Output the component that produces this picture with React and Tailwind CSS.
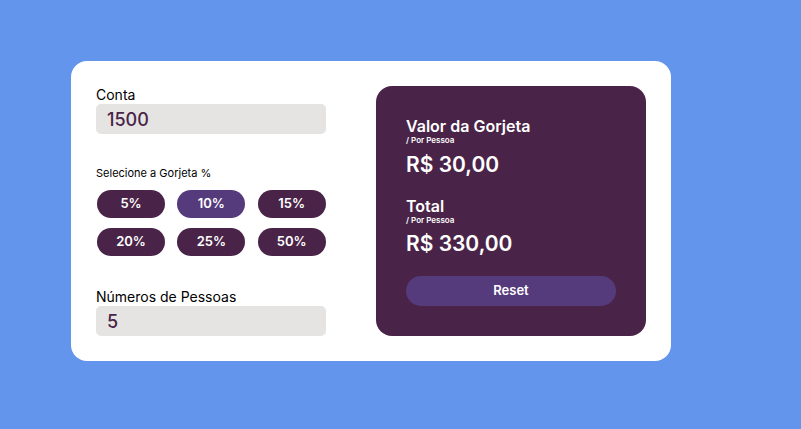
import React, { useState } from 'react';

const tips = [5, 10, 15, 20, 25, 50];

const App = () => {
    const [bill, setBill] = useState('1500');
    const [people, setPeople] = useState('5');
    const [tip, setTip] = useState(10);

    const b = parseFloat(bill) || 0;
    const p = parseInt(people) || 1;
    const tipValue = (b * tip) / 100 / p;
    const total = (b + (b * tip) / 100) / p;
    const fmt = (n) => 'R$ ' + n.toFixed(2).replace('.', ',');

    return (
        <div
            className="min-h-screen w-full bg-[#6495ed] pt-[61px] pl-[71px]"
            style={{ fontFamily: 'Inter, "Noto Sans", sans-serif' }}
        >
            <div className="w-[600px] h-[300px] bg-white rounded-[16px] p-[25px] pr-[24px] flex items-start gap-[50px]">
                {/* left column */}
                <div className="w-[230px] flex flex-col">
                    <label className="shrink-0 text-[14px] leading-[18px] text-black">Conta</label>
                    <input
                        value={bill}
                        onChange={(e) => setBill(e.target.value)}
                        className="shrink-0 h-[30px] w-full bg-[#e5e4e2] rounded-[5px] px-[11px] text-[18px] font-medium text-[#4a2448] outline-none"
                    />

                    <p className="shrink-0 mt-[32px] text-[11px] leading-[14px] text-black">Selecione a Gorjeta %</p>
                    <div className="shrink-0 mt-[10px] grid grid-cols-3 gap-x-[12px] gap-y-[10px] pl-[1px]">
                        {tips.map((t) => (
                            <button
                                key={t}
                                onClick={() => setTip(t)}
                                className={
                                    'h-[28px] w-[68px] rounded-full text-white text-[13px] font-semibold ' +
                                    (tip === t ? 'bg-[#553a7c]' : 'bg-[#4a2448]')
                                }
                            >
                                {t}%
                            </button>
                        ))}
                    </div>

                    <label className="shrink-0 mt-[32px] text-[14px] leading-[18px] text-black">Números de Pessoas</label>
                    <input
                        value={people}
                        onChange={(e) => setPeople(e.target.value)}
                        className="shrink-0 h-[30px] w-full bg-[#e5e4e2] rounded-[5px] px-[11px] text-[18px] font-medium text-[#4a2448] outline-none"
                    />
                </div>

                {/* result panel */}
                <div className="w-[270px] h-[250px] bg-[#4a2448] rounded-[16px] px-[30px] pt-[30px] text-white">
                    <h2 className="text-[16px] leading-[20px] font-semibold">Valor da Gorjeta</h2>
                    <p className="text-[8px] leading-[8px] font-semibold">/ Por Pessoa</p>
                    <p className="mt-[7px] text-[21px] leading-[28px] font-semibold">{fmt(tipValue)}</p>

                    <h2 className="mt-[17px] text-[16px] leading-[20px] font-semibold">Total</h2>
                    <p className="text-[8px] leading-[8px] font-semibold">/ Por Pessoa</p>
                    <p className="mt-[6px] text-[21px] leading-[28px] font-semibold">{fmt(total)}</p>

                    <button
                        onClick={() => { setBill(''); setPeople(''); setTip(0); }}
                        className="mt-[18px] w-[210px] h-[30px] rounded-full bg-[#553a7c] text-[13px] font-semibold"
                    >
                        Reset
                    </button>
                </div>
            </div>
        </div>
    );
};

export default App;
